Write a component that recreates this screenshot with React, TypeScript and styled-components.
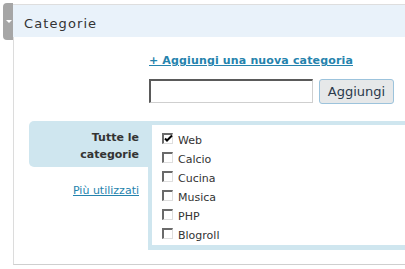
import React from 'react';
import styled, { createGlobalStyle } from 'styled-components';

const GlobalStyle = createGlobalStyle`
  html, body {
    margin: 0;
    padding: 0;
    background: #fff;
  }
  body {
    font-family: "DejaVu Sans", Verdana, sans-serif;
    color: #333;
  }
`;

const Page = styled.div`
  display: flex;
  align-items: flex-start;
  width: 405px;
  height: 269px;
  padding: 3px 0 0 3px;
  box-sizing: border-box;
  overflow: hidden;
`;

const Toggle = styled.div`
  position: relative;
  flex: none;
  width: 10px;
  height: 37px;
  background: #a6a6a6;
  border-radius: 4px 0 0 4px;

  &::after {
    content: '';
    position: absolute;
    left: 3px;
    top: 17px;
    border-left: 3px solid transparent;
    border-right: 3px solid transparent;
    border-top: 3px solid #fff;
  }
`;

const Box = styled.div`
  flex: 1;
  margin-top: 1px;
  display: flex;
  flex-direction: column;
`;

const Header = styled.h3`
  margin: 0;
  height: 33px;
  box-sizing: border-box;
  padding: 5px 0 0 11px;
  border-top: 1px solid #dedede;
  background: #e9f2fa;
  font-size: 13px;
  font-weight: normal;
  line-height: 28px;
  letter-spacing: 1.1px;
  color: #333;
`;

const Body = styled.div`
  height: 228px;
  box-sizing: border-box;
  border-left: 1px solid #dcdcdc;
  border-bottom: 1px solid #cfcfcf;
  padding-top: 17px;
`;

const AddLink = styled.a`
  display: block;
  margin-left: 135px;
  font-size: 11px;
  font-weight: bold;
  line-height: 14px;
  letter-spacing: 0.15px;
  color: #2583ad;
  text-decoration: underline;
  cursor: pointer;
`;

const AddForm = styled.div`
  display: flex;
  align-items: flex-start;
  gap: 6px;
  margin: 11px 0 0 135px;
`;

const TextInput = styled.input`
  width: 164px;
  height: 24px;
  box-sizing: border-box;
  margin: 0;
  padding: 2px 4px;
  border-style: solid;
  border-width: 2px 1px 1px 2px;
  border-color: #5a5a5a #cfcfcf #cfcfcf #5a5a5a;
  background: #fff;
  font-family: inherit;
  font-size: 12px;
  outline: none;
`;

const AddButton = styled.button`
  width: 75px;
  height: 25px;
  margin: 0;
  padding: 0;
  border: 1px solid #9cc3dc;
  border-radius: 3px;
  background: #e6e8e9;
  font-family: inherit;
  font-size: 13px;
  color: #2a3a4c;
  cursor: pointer;
`;

const Tabs = styled.div`
  display: flex;
  margin: 17px 0 0 15px;
`;

const TabColumn = styled.div`
  width: 119px;
  flex: none;
  display: flex;
  flex-direction: column;
  align-items: stretch;
`;

const Tab = styled.div<{ $active?: boolean }>`
  padding: ${p => (p.$active ? '8px 9px 4px 0' : '15px 9px 0 0')};
  background: ${p => (p.$active ? '#cfe6ef' : 'transparent')};
  border-radius: 5px 0 0 5px;
  text-align: right;
  font-size: 11px;
  line-height: 17px;
  font-weight: ${p => (p.$active ? 'bold' : 'normal')};
  color: ${p => (p.$active ? '#333' : '#2583ad')};
  text-decoration: ${p => (p.$active ? 'none' : 'underline')};
  cursor: pointer;
`;

const ListFrame = styled.div`
  flex: 1;
  padding: 4px 0 5px 4px;
  background: #cfe6ef;
`;

const List = styled.ul`
  list-style: none;
  margin: 0;
  height: 120px;
  box-sizing: border-box;
  padding: 6px 0 0 10px;
  background: #fff;
`;

const Item = styled.li`
  display: flex;
  align-items: flex-start;
  gap: 5px;
  height: 19px;
  font-size: 11px;
  line-height: 19px;
  color: #333;
`;

const Check = styled.span`
  position: relative;
  flex: none;
  width: 11px;
  height: 11px;
  margin-top: 2px;
  box-sizing: border-box;
  border-style: solid;
  border-width: 2px 1px 1px 2px;
  border-color: #6a6a6a #dedede #dedede #6a6a6a;
  background: #fff;

  svg {
    position: absolute;
    left: 0;
    top: -1px;
  }
`;

const categories = [
  { name: 'Web', checked: true },
  { name: 'Calcio', checked: false },
  { name: 'Cucina', checked: false },
  { name: 'Musica', checked: false },
  { name: 'PHP', checked: false },
  { name: 'Blogroll', checked: false },
];

function Checkbox({ checked }: { checked: boolean }): JSX.Element {
  return (
    <Check>
      {checked && (
        <svg width="9" height="9" viewBox="0 0 9 9">
          <path d="M1 4.5 L3 6.5 L8 1.5" fill="none" stroke="#000" strokeWidth="2" />
        </svg>
      )}
    </Check>
  );
}

export default function App(): JSX.Element {
  return (
    <>
      <GlobalStyle />
      <Page>
        <Toggle />
        <Box>
          <Header>Categorie</Header>
          <Body>
            <AddLink>+ Aggiungi una nuova categoria</AddLink>
            <AddForm>
              <TextInput type="text" />
              <AddButton type="button">Aggiungi</AddButton>
            </AddForm>
            <Tabs>
              <TabColumn>
                <Tab $active>Tutte le<br />categorie</Tab>
                <Tab>Più utilizzati</Tab>
              </TabColumn>
              <ListFrame>
                <List>
                  {categories.map(c => (
                    <Item key={c.name}>
                      <Checkbox checked={c.checked} />
                      {c.name}
                    </Item>
                  ))}
                </List>
              </ListFrame>
            </Tabs>
          </Body>
        </Box>
      </Page>
    </>
  );
}
